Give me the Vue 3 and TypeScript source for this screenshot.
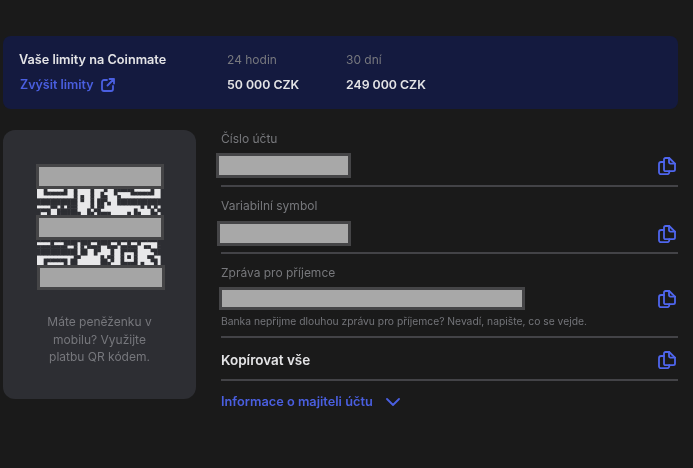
<script setup lang="ts">
const qrTop: string[] = [
  '..#.....#..#....#...#..######.....#..',
  '..#######..#....#..#...#....#######..',
  '...........#.#..#..##...#............',
  '############.#..#.###...#############',
  '############....#.##.#..#############',
  '....##.#.###....#.##...........#.#.#.',
  '####..######...#.##..........#....#.#',
  '#..#..#######..##.####.....#.##...##.',
]
const qrBottom: string[] = [
  '#####################################',
  '....#...####.###..####..#..#..#.....#',
  '#########..#.#.####..###.#####..##..#',
  '############.##..##...#..#####....###',
  '############.##..#....#..#...#.....##',
  '...........##......#.##..#.#.#...##..',
  '..#######.##.......##.#..#...#....##.',
  '..#.....#.##.......###...#####.#...#.',
]
const m = 3.34
const size = m + 0.4
const cells = (rows: string[], start: number) =>
  rows.flatMap((row, r) =>
    [...row].map((c, i) => ({ c, x: i * m, y: (r + start) * m })).filter((k) => k.c === '#'),
  )
const dark = [...cells(qrTop, 7), ...cells(qrBottom, 22)]
const copyRows = [
  { label: 'Číslo účtu', cls: 'r1' },
  { label: 'Variabilní symbol', cls: 'r2' },
]
</script>

<template>
  <div class="page">
    <section class="banner">
      <strong class="title">Vaše limity na Coinmate</strong>
      <span class="muted">24 hodin</span>
      <span class="muted">30 dní</span>
      <a class="link">
        Zvýšit limity
        <svg class="ext" width="14" height="14" viewBox="0 0 14 14" fill="none" stroke="currentColor" stroke-width="1.8" stroke-linecap="round" stroke-linejoin="round">
          <path d="M6 2H3a2 2 0 0 0-2 2v7a2 2 0 0 0 2 2h7a2 2 0 0 0 2-2V8" />
          <path d="M8.500 1H13v4.500M13 1 6.500 7.500" />
        </svg>
      </a>
      <strong class="amount">50 000 CZK</strong>
      <strong class="amount">249 000 CZK</strong>
    </section>

    <main class="columns">
      <aside class="card">
        <div class="qr">
          <svg width="124" height="124" viewBox="0 0 124 124">
            <rect width="123.600" height="124" fill="#e8e8ea" />
            <rect v-for="(d, i) in dark" :key="i" :x="d.x" :y="d.y" :width="size" :height="size" fill="#2d2e33" />
          </svg>
          <div class="mask m1"></div>
          <div class="mask m2"></div>
          <div class="mask m3"></div>
        </div>
        <p class="caption">Máte peněženku v mobilu? Využijte platbu QR kódem.</p>
      </aside>

      <div class="details">
        <div v-for="row in copyRows" :key="row.label" class="row" :class="row.cls">
          <div class="label">{{ row.label }}</div>
          <div class="value">
            <div class="redact"></div>
            <svg class="copy" width="18" height="18" viewBox="0 0 18 18" fill="none" stroke="currentColor" stroke-width="1.8" stroke-linecap="round" stroke-linejoin="round">
              <path d="M6 2.500A1.500 1.500 0 0 1 7.500 1h3.700L17 6.600v6A1.600 1.600 0 0 1 15.400 14.200H7.500A1.500 1.500 0 0 1 6 12.700Z" />
              <path d="M11 1v4.300A1.300 1.300 0 0 0 12.300 6.600H17" />
              <path d="M6 5H3.200A2.200 2.200 0 0 0 1 7.200v8.100A1.900 1.900 0 0 0 2.900 17.200h6.200A2.200 2.200 0 0 0 11.300 15v-.8" />
            </svg>
          </div>
        </div>

        <div class="row r3">
          <div class="label">Zpráva pro příjemce</div>
          <div class="value">
            <div class="redact"></div>
            <svg class="copy" width="18" height="18" viewBox="0 0 18 18" fill="none" stroke="currentColor" stroke-width="1.8" stroke-linecap="round" stroke-linejoin="round">
              <path d="M6 2.500A1.500 1.500 0 0 1 7.500 1h3.700L17 6.600v6A1.600 1.600 0 0 1 15.400 14.200H7.500A1.500 1.500 0 0 1 6 12.700Z" />
              <path d="M11 1v4.300A1.300 1.300 0 0 0 12.300 6.600H17" />
              <path d="M6 5H3.200A2.200 2.200 0 0 0 1 7.200v8.100A1.900 1.900 0 0 0 2.900 17.200h6.200A2.200 2.200 0 0 0 11.300 15v-.8" />
            </svg>
          </div>
          <p class="hint">Banka nepřijme dlouhou zprávu pro příjemce? Nevadí, napište, co se vejde.</p>
        </div>

        <div class="row r4">
          <strong class="all">Kopírovat vše</strong>
          <svg class="copy" width="18" height="18" viewBox="0 0 18 18" fill="none" stroke="currentColor" stroke-width="1.8" stroke-linecap="round" stroke-linejoin="round">
            <path d="M6 2.500A1.500 1.500 0 0 1 7.500 1h3.700L17 6.600v6A1.600 1.600 0 0 1 15.400 14.200H7.500A1.500 1.500 0 0 1 6 12.700Z" />
            <path d="M11 1v4.300A1.300 1.300 0 0 0 12.300 6.600H17" />
            <path d="M6 5H3.200A2.200 2.200 0 0 0 1 7.200v8.100A1.900 1.900 0 0 0 2.900 17.200h6.200A2.200 2.200 0 0 0 11.300 15v-.8" />
          </svg>
        </div>

        <a class="owner">
          Informace o majiteli účtu
          <svg width="14" height="8" viewBox="0 0 14 8" fill="none" stroke="currentColor" stroke-width="1.8" stroke-linecap="round" stroke-linejoin="round">
            <path d="M1 1l6 6 6-6" />
          </svg>
        </a>
      </div>
    </main>
  </div>
</template>

<style>
html, body { background: #1a1a1a; }
</style>

<style scoped>
.page {
  box-sizing: border-box;
  height: 468px;
  padding: 36px 15px 0 3px;
  background: #1a1a1a;
  font-family: Inter, "Noto Sans", sans-serif;
  color: #e4e4e6;
  overflow: hidden;
}
.banner {
  display: grid;
  grid-template-columns: 208px 119px 1fr;
  grid-auto-rows: 25px;
  align-items: center;
  box-sizing: border-box;
  height: 73px;
  padding: 11px 16px;
  background: #141a3f;
  border-radius: 8px;
  filter: blur(0.35px);
}
.title { font-size: 12.7px; font-weight: 600; }
.muted { font-size: 12px; color: #77787e; }
.amount { font-size: 12.300px; font-weight: 600; }
.link {
  display: flex;
  align-items: center;
  gap: 7px;
  margin-left: 1px;
  font-size: 12.500px;
  font-weight: 600;
  color: #4a5fe0;
}
.columns { display: flex; gap: 25px; margin-top: 21px; }
.card {
  box-sizing: border-box;
  width: 193px;
  height: 269px;
  padding-top: 35px;
  background: #2d2e33;
  border-radius: 12px;
}
.qr { position: relative; width: 124px; height: 124px; margin-left: 34px; }
.qr svg { display: block; filter: blur(0.5px); }
.mask {
  position: absolute;
  box-sizing: border-box;
  width: 128px;
  height: 25px;
  background: #a5a5a5;
  border: 3px solid #454547;
}
.m1 { left: -1px; top: -1px; }
.m2 { left: -1px; top: 50px; }
.m3 { left: 0; top: 100px; }
.caption {
  width: 122px;
  margin: 24px auto 0;
  font-size: 12px;
  line-height: 17.500px;
  text-align: center;
  color: #76777c;
  filter: blur(0.35px);
}
.details { flex: 1; min-width: 0; }
.row { border-bottom: 2px solid #434347; }
.r1 { padding: 0 0 7px; }
.r2 { padding: 10px 0 6px; }
.r3 { padding: 10px 0 8px; }
.r4 {
  display: flex;
  justify-content: space-between;
  align-items: center;
  box-sizing: border-box;
  height: 43px;
  padding: 2px 2px 0 0;
}
.label {
  font-size: 12px;
  line-height: 18px;
  color: #77787c;
  filter: blur(0.35px);
}
.value {
  display: flex;
  justify-content: space-between;
  align-items: center;
  margin-top: 5px;
  padding-right: 2px;
}
.r2 .value { margin-top: 6px; }
.r3 .value { margin-top: 5px; }
.redact {
  box-sizing: border-box;
  width: 135px;
  height: 25px;
  margin-left: -5px;
  background: #a8a8a8;
  border: 3px solid #454547;
}
.r2 .redact { width: 134px; margin-left: -4px; }
.r3 .redact { width: 306px; height: 23px; margin-left: -2px; }
.copy { color: #4f66ee; flex: none; filter: blur(0.3px); }
.hint {
  margin: 4px 0 0;
  font-size: 10.300px;
  line-height: 14px;
  color: #737479;
  filter: blur(0.35px);
}
.all { font-size: 13.500px; font-weight: 600; color: #e4e4e6; filter: blur(0.35px); }
.owner {
  display: flex;
  align-items: center;
  gap: 13px;
  margin-top: 13px;
  font-size: 12.750px;
  line-height: 16px;
  font-weight: 600;
  color: #4a5fe0;
  filter: blur(0.35px);
}
</style>
